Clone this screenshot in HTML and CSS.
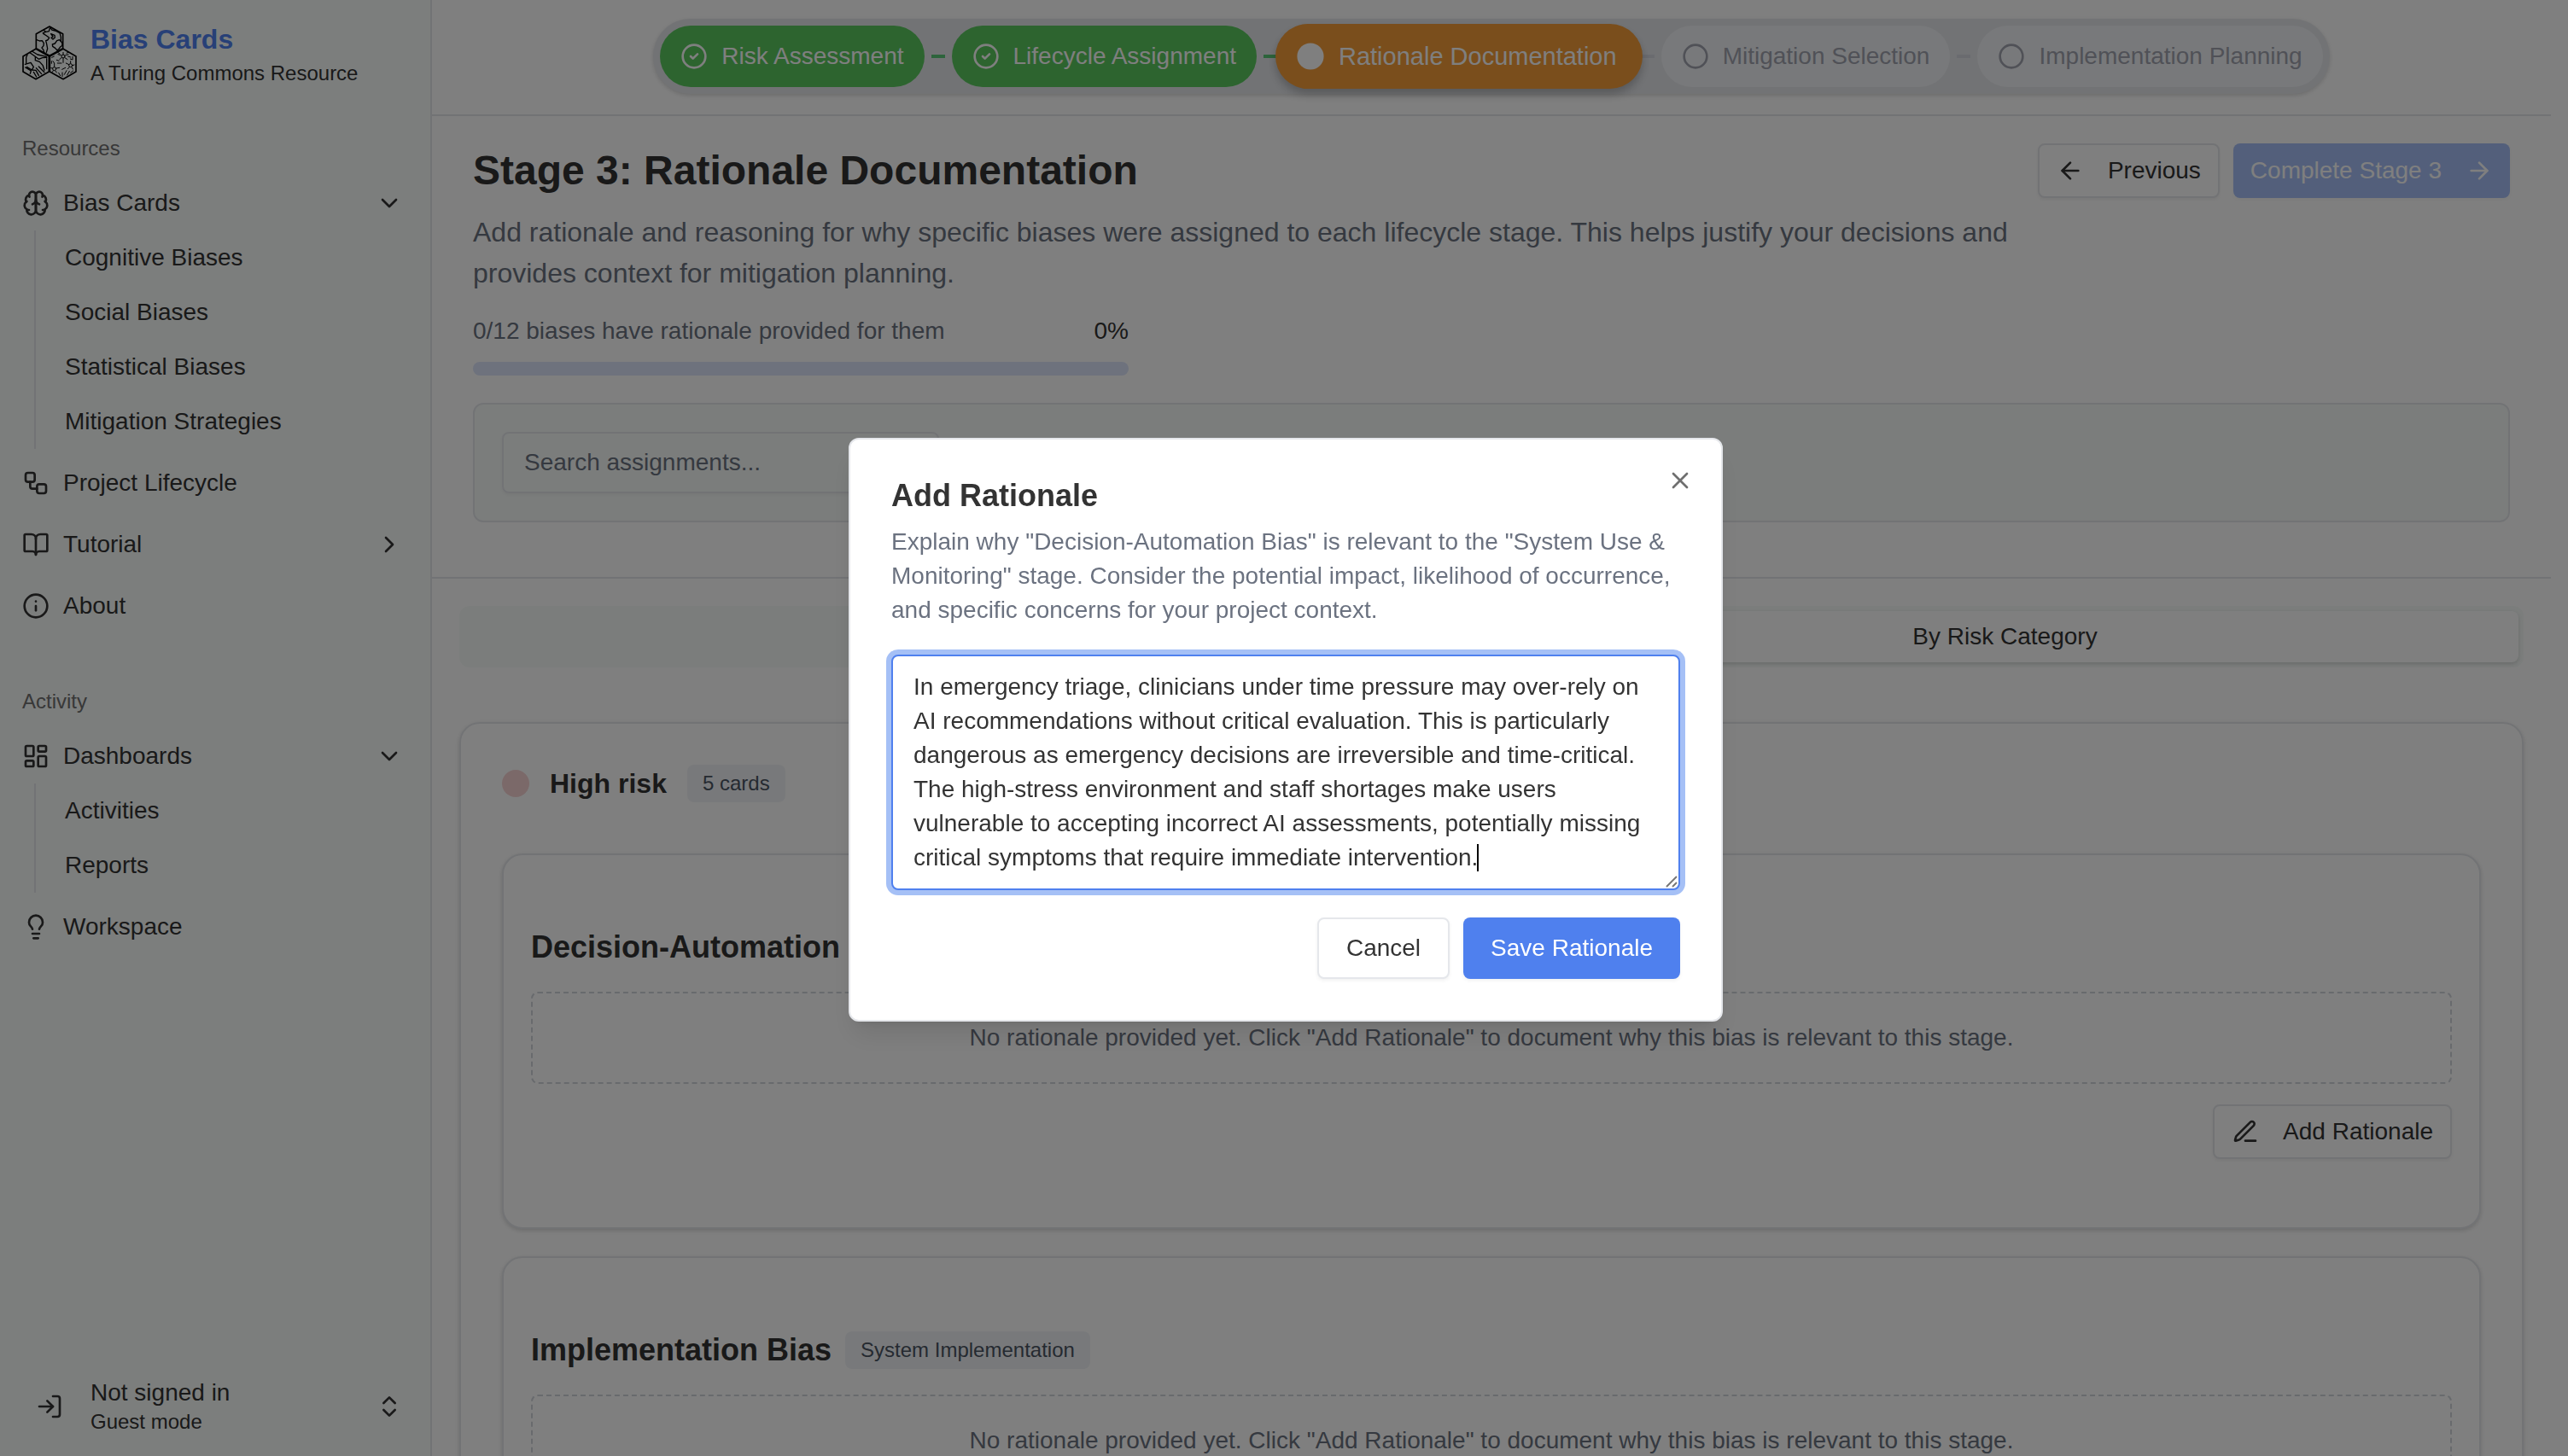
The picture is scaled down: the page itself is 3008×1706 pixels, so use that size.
FILE: index.html
```html
<!DOCTYPE html>
<html lang="en">
<head>
<meta charset="utf-8">
<title>Bias Cards</title>
<link rel="stylesheet" href="styles.css">
</head>
<body>
<div class="app">
  <aside class="sidebar">
    <header class="brand">
      <svg class="brand-logo" viewBox="18 18 192 192" fill="none" stroke="#000" stroke-width="5" stroke-linejoin="round" stroke-linecap="round" aria-hidden="true">
        <path d="M114 21 161 47V98L114 124 67 98V47Z"/>
        <path d="M66 100 112 126V180L66 206 21 180V126Z"/>
        <path d="M162 100 207 126V180L162 206 115 180V126Z"/>
        <g stroke-width="4">
          <path d="M93 34 101 40 112 38 115 27M101 40 91 44M116 23 122 33 134 36 150 44 154 58V74"/>
          <path d="M69 68 79 72 88 71 94 80 93 89 87 96 93 104 95 113M92 46 104 54 113 61 107 69 101 71 104 83 107 99 103 112"/>
          <path d="M119 47 132 52 133 60 126 66 120 61 126 57Z"/>
          <path d="M133 81 140 71 149 68 158 77 159 88 151 94 147 100 141 105 134 97 125 91 124 84Z"/>
          <path d="M36 121 32 130V150M52 108 72 120 103 127M46 114 64 127 76 136 89 131 105 130M64 127 64 140 79 145 90 157 96 175"/>
          <path d="M104 134V170M28 154 48 148 58 163 52 174 34 163M29 165 49 177 46 187M52 174 66 175 76 193M67 167 86 188M76 162 96 182M58 181 68 198"/>
        </g>
        <g stroke-width="3">
          <circle cx="162" cy="126" r="6"/><circle cx="188" cy="158" r="6"/><circle cx="131" cy="170" r="6"/>
          <path d="M162 112V120M162 132V148M154 122 144 119M170 122 180 119M156 131 149 137M168 131 177 137M182 155 172 150M188 150V143M194 158 201 156M184 164 178 170M192 164 196 171M125 168 119 167M131 163V150L126 143M137 168 149 166M134 176 139 183M127 176 124 181"/>
          <path d="M122 130 130 126M142 111 150 117M181 111 174 115M195 127V138L187 135M142 150H156M170 166 158 172M159 183V197M146 184 152 194M174 176 166 190M184 178 176 192M197 177 188 184M121 143V151M147 142 139 139M179 126 188 129"/>
        </g>
      </svg>
      <div>
        <p class="brand-title">Bias Cards</p>
        <p class="brand-sub">A Turing Commons Resource</p>
      </div>
    </header>

    <nav class="nav-group" aria-label="Resources">
      <h2 class="nav-label">Resources</h2>
      <ul class="nav-list">
        <li>
          <a class="nav-item" href="#">
            <svg class="icon" viewBox="0 0 24 24"><path d="M12 5a3 3 0 1 0-5.997.125 4 4 0 0 0-2.526 5.77 4 4 0 0 0 .556 6.588A4 4 0 1 0 12 18Z"/><path d="M12 5a3 3 0 1 1 5.997.125 4 4 0 0 1 2.526 5.77 4 4 0 0 1-.556 6.588A4 4 0 1 1 12 18Z"/><path d="M15 13a4.5 4.5 0 0 1-3-4 4.5 4.5 0 0 1-3 4"/><path d="M17.599 6.5a3 3 0 0 0 .399-1.375"/><path d="M6.003 5.125A3 3 0 0 0 6.401 6.5"/><path d="M3.477 10.896a4 4 0 0 1 .585-.396"/><path d="M19.938 10.5a4 4 0 0 1 .585.396"/><path d="M6 18a4 4 0 0 1-1.967-.516"/><path d="M19.967 17.484A4 4 0 0 1 18 18"/></svg>
            <span class="nav-text">Bias Cards</span>
            <svg class="icon" viewBox="0 0 24 24"><path d="m6 9 6 6 6-6"/></svg>
          </a>
          <ul class="nav-sub">
            <li><a class="nav-subitem" href="#">Cognitive Biases</a></li>
            <li><a class="nav-subitem" href="#">Social Biases</a></li>
            <li><a class="nav-subitem" href="#">Statistical Biases</a></li>
            <li><a class="nav-subitem" href="#">Mitigation Strategies</a></li>
          </ul>
        </li>
        <li>
          <a class="nav-item" href="#">
            <svg class="icon" viewBox="0 0 24 24"><rect width="8" height="8" x="3" y="3" rx="2"/><path d="M7 11v4a2 2 0 0 0 2 2h4"/><rect width="8" height="8" x="13" y="13" rx="2"/></svg>
            <span class="nav-text">Project Lifecycle</span>
          </a>
        </li>
        <li>
          <a class="nav-item" href="#">
            <svg class="icon" viewBox="0 0 24 24"><path d="M12 7v14"/><path d="M3 18a1 1 0 0 1-1-1V4a1 1 0 0 1 1-1h5a4 4 0 0 1 4 4 4 4 0 0 1 4-4h5a1 1 0 0 1 1 1v13a1 1 0 0 1-1 1h-6a3 3 0 0 0-3 3 3 3 0 0 0-3-3z"/></svg>
            <span class="nav-text">Tutorial</span>
            <svg class="icon" viewBox="0 0 24 24"><path d="m9 18 6-6-6-6"/></svg>
          </a>
        </li>
        <li>
          <a class="nav-item" href="#">
            <svg class="icon" viewBox="0 0 24 24"><circle cx="12" cy="12" r="10"/><path d="M12 16v-4"/><path d="M12 8h.01"/></svg>
            <span class="nav-text">About</span>
          </a>
        </li>
      </ul>
    </nav>

    <nav class="nav-group" aria-label="Activity">
      <h2 class="nav-label">Activity</h2>
      <ul class="nav-list">
        <li>
          <a class="nav-item" href="#">
            <svg class="icon" viewBox="0 0 24 24"><rect width="7" height="9" x="3" y="3" rx="1"/><rect width="7" height="5" x="14" y="3" rx="1"/><rect width="7" height="9" x="14" y="12" rx="1"/><rect width="7" height="5" x="3" y="16" rx="1"/></svg>
            <span class="nav-text">Dashboards</span>
            <svg class="icon" viewBox="0 0 24 24"><path d="m6 9 6 6 6-6"/></svg>
          </a>
          <ul class="nav-sub">
            <li><a class="nav-subitem" href="#">Activities</a></li>
            <li><a class="nav-subitem" href="#">Reports</a></li>
          </ul>
        </li>
        <li>
          <a class="nav-item" href="#">
            <svg class="icon" viewBox="0 0 24 24"><path d="M15 14c.2-1 .7-1.700 1.500-2.500 1-.9 1.500-2.200 1.500-3.500A6 6 0 0 0 6 8c0 1 .2 2.200 1.500 3.500.7.7 1.300 1.500 1.500 2.500"/><path d="M9 18h6"/><path d="M10 22h4"/></svg>
            <span class="nav-text">Workspace</span>
          </a>
        </li>
      </ul>
    </nav>

    <footer class="account">
      <button class="account-button" type="button">
        <span class="account-avatar">
          <svg class="icon" viewBox="0 0 24 24"><path d="M15 3h4a2 2 0 0 1 2 2v14a2 2 0 0 1-2 2h-4"/><path d="m10 17 5-5-5-5"/><path d="M15 12H3"/></svg>
        </span>
        <span class="account-text">
          <span class="account-name">Not signed in</span>
          <span class="account-mode">Guest mode</span>
        </span>
        <svg class="icon" viewBox="0 0 24 24"><path d="m7 15 5 5 5-5"/><path d="m7 9 5-5 5 5"/></svg>
      </button>
    </footer>
  </aside>

  <main class="main">
    <div class="stage-bar">
      <ol class="stages">
        <li class="stage stage-done"><svg class="icon" viewBox="0 0 24 24"><circle cx="12" cy="12" r="10"/><path d="m9 12 2 2 4-4"/></svg>Risk Assessment</li>
        <li class="stage-link stage-link-done" aria-hidden="true"></li>
        <li class="stage stage-done"><svg class="icon" viewBox="0 0 24 24"><circle cx="12" cy="12" r="10"/><path d="m9 12 2 2 4-4"/></svg>Lifecycle Assignment</li>
        <li class="stage-link stage-link-done" aria-hidden="true"></li>
        <li class="stage stage-current" aria-current="step"><svg class="icon" viewBox="0 0 24 24"><circle cx="12" cy="12" r="10"/></svg>Rationale Documentation</li>
        <li class="stage-link" aria-hidden="true"></li>
        <li class="stage"><svg class="icon" viewBox="0 0 24 24"><circle cx="12" cy="12" r="10"/></svg>Mitigation Selection</li>
        <li class="stage-link" aria-hidden="true"></li>
        <li class="stage"><svg class="icon" viewBox="0 0 24 24"><circle cx="12" cy="12" r="10"/></svg>Implementation Planning</li>
      </ol>
    </div>

    <section class="intro">
      <div class="intro-row">
        <div class="intro-text">
          <h1 class="page-title">Stage 3: Rationale Documentation</h1>
          <p class="page-desc">Add rationale and reasoning for why specific biases were assigned to each lifecycle stage. This helps justify your decisions and provides context for mitigation planning.</p>
        </div>
        <div class="intro-actions">
          <button class="btn btn-small" type="button"><svg class="icon" viewBox="0 0 24 24"><path d="m12 19-7-7 7-7"/><path d="M19 12H5"/></svg>Previous</button>
          <button class="btn btn-small btn-primary" type="button" disabled>Complete Stage 3<svg class="icon" viewBox="0 0 24 24"><path d="M5 12h14"/><path d="m12 5 7 7-7 7"/></svg></button>
        </div>
      </div>
      <div class="progress">
        <div class="progress-label"><span>0/12 biases have rationale provided for them</span><span class="progress-value">0%</span></div>
        <div class="progress-track" role="progressbar" aria-valuenow="0" aria-valuemin="0" aria-valuemax="100" aria-label="Rationale progress"></div>
      </div>
      <div class="filters">
        <input class="search" type="text" placeholder="Search assignments..." aria-label="Search assignments">
      </div>
    </section>

    <section class="content">
      <div class="tabs" role="tablist">
        <button class="tab" type="button" role="tab" aria-selected="false">By Lifecycle Stage</button>
        <button class="tab tab-active" type="button" role="tab" aria-selected="true">By Risk Category</button>
      </div>

      <section class="risk">
        <header class="risk-head">
          <span class="risk-dot"></span>
          <h2 class="risk-title">High risk</h2>
          <span class="badge">5 cards</span>
        </header>
        <div class="cards">
          <article class="card">
            <header class="card-head">
              <h3 class="card-title">Decision-Automation Bias</h3>
              <span class="badge">System Use &amp; Monitoring</span>
            </header>
            <p class="empty">No rationale provided yet. Click "Add Rationale" to document why this bias is relevant to this stage.</p>
            <div class="card-actions">
              <button class="btn btn-small" type="button"><svg class="icon" viewBox="0 0 24 24"><path d="M12 20h9"/><path d="M16.376 3.622a1 1 0 0 1 3.002 3.002L7.368 18.635a2 2 0 0 1-.855.506l-2.872.838a.5.5 0 0 1-.62-.62l.838-2.872a2 2 0 0 1 .506-.854z"/></svg>Add Rationale</button>
            </div>
          </article>
          <article class="card">
            <header class="card-head">
              <h3 class="card-title">Implementation Bias</h3>
              <span class="badge">System Implementation</span>
            </header>
            <p class="empty">No rationale provided yet. Click "Add Rationale" to document why this bias is relevant to this stage.</p>
          </article>
        </div>
      </section>
    </section>
  </main>
</div>

<div class="overlay">
  <div class="modal" role="dialog" aria-modal="true" aria-labelledby="modal-title" aria-describedby="modal-desc">
    <h2 class="modal-title" id="modal-title">Add Rationale</h2>
    <p class="modal-desc" id="modal-desc">Explain why "Decision-Automation Bias" is relevant to the "System Use &amp; Monitoring" stage. Consider the potential impact, likelihood of occurrence, and specific concerns for your project context.</p>
    <div class="field">
      <textarea class="rationale" rows="6" aria-labelledby="modal-title">In emergency triage, clinicians under time pressure may over-rely on AI recommendations without critical evaluation. This is particularly dangerous as emergency decisions are irreversible and time-critical. The high-stress environment and staff shortages make users vulnerable to accepting incorrect AI assessments, potentially missing critical symptoms that require immediate intervention.</textarea>
      <span class="caret" aria-hidden="true"></span>
      <svg class="grip" viewBox="0 0 14 14" aria-hidden="true"><path d="M1 13 13 1M8 13 13 8"/></svg>
    </div>
    <div class="modal-actions">
      <button class="btn" type="button">Cancel</button>
      <button class="btn btn-primary" type="button">Save Rationale</button>
    </div>
    <button class="modal-close" type="button" aria-label="Close"><svg class="icon" viewBox="0 0 24 24"><path d="M18 6 6 18"/><path d="m6 6 12 12"/></svg></button>
  </div>
</div>
</body>
</html>
```
FILE: styles.css
```css
:root {
  --text: #333;
  --muted: #6b7280;
  --border: #e5e7eb;
  --surface: #f9fcfb;
  --primary: #4f80ee;
  --shadow-sm: 0 2px 6px rgba(0, 0, 0, .1), 0 2px 4px rgba(0, 0, 0, .06);
}

* { box-sizing: border-box; }

body {
  margin: 0;
  background: #fff;
  color: var(--text);
  font: 28px/40px "Liberation Sans", Arial, Helvetica, sans-serif;
}

h1, h2, h3, p, ul, ol { margin: 0; padding: 0; }
ul, ol { list-style: none; }
a { color: inherit; text-decoration: none; }
button, input, textarea { font: inherit; color: inherit; }

.icon {
  width: 32px;
  height: 32px;
  flex: none;
  fill: none;
  stroke: currentColor;
  stroke-width: 2;
  stroke-linecap: round;
  stroke-linejoin: round;
}

.app {
  display: flex;
  height: 100vh;
  overflow: hidden;
}

/* Sidebar */
.sidebar {
  display: flex;
  flex-direction: column;
  width: 506px;
  flex: none;
  padding: 22px 30px 16px 26px;
  background: var(--surface);
  border-right: 2px solid var(--border);
}

.brand { display: flex; align-items: center; gap: 16px; margin-bottom: 40px; }
.brand-logo { width: 64px; height: 64px; }
.brand-title { font-size: 32px; line-height: 48px; font-weight: 700; color: var(--primary); }
.brand-sub { font-size: 24px; line-height: 32px; }

.nav-group { margin-bottom: 48px; }
.nav-label { font-size: 24px; line-height: 64px; font-weight: 400; color: #707070; }
.nav-list { display: flex; flex-direction: column; gap: 8px; }
.nav-item { display: flex; align-items: center; gap: 16px; height: 64px; margin-right: 2px; }
.nav-text { flex: 1; }
.nav-sub {
  display: flex;
  flex-direction: column;
  gap: 8px;
  margin-left: 14px;
  padding: 4px 0 4px 34px;
  border-left: 2px solid var(--border);
}
.nav-subitem { display: block; line-height: 56px; }

.account { margin-top: auto; }
.account-button {
  display: flex;
  align-items: center;
  gap: 16px;
  width: 100%;
  height: 84px;
  padding: 0 2px 0 0;
  border: 0;
  background: none;
  text-align: left;
}
.account-avatar { display: grid; place-items: center; width: 64px; height: 64px; }
.account-text { display: flex; flex-direction: column; flex: 1; }
.account-name { line-height: 36px; }
.account-mode { font-size: 24px; line-height: 32px; }

/* Stage bar */
.main { flex: 1; min-width: 0; padding-right: 20px; }
.stage-bar {
  display: flex;
  justify-content: center;
  padding: 22px 0 24px;
  border-bottom: 2px solid var(--border);
}
.stages {
  display: flex;
  align-items: center;
  gap: 8px;
  height: 88px;
  padding: 0 8px;
  border-radius: 44px;
  background: #e5e7eb;
  box-shadow: var(--shadow-sm);
}
.stage {
  display: flex;
  align-items: center;
  gap: 16px;
  height: 72px;
  padding: 0 24px;
  border-radius: 36px;
  background: #f1f3f6;
  color: #a0a3af;
  white-space: nowrap;
}
.stage-done { background: #5ac85f; color: #fff; }
.stage-current {
  position: relative;
  z-index: 1;
  height: 76px;
  margin: 0 -10px;
  padding: 0 30px 0 24px;
  border-radius: 38px;
  background: #f49c38;
  color: #fff;
  font-size: 29px;
  box-shadow: 0 8px 12px rgba(0, 0, 0, .14), 0 4px 8px rgba(0, 0, 0, .1);
}
.stage-current .icon { width: 34px; height: 34px; fill: currentColor; }
.stage-link { width: 16px; height: 4px; background: #d5d7de; }
.stage-link-done { background: #5ac878; }

/* Intro */
.intro { padding: 32px 48px 64px; border-bottom: 2px solid var(--border); }
.intro-row { display: flex; align-items: flex-start; gap: 32px; }
.intro-text { flex: 1; }
.page-title { font-size: 48px; line-height: 64px; margin-bottom: 16px; }
.page-desc { font-size: 32px; line-height: 48px; color: var(--muted); }
.intro-actions { display: flex; gap: 16px; }

.btn {
  display: flex;
  align-items: center;
  height: 72px;
  padding: 0 32px;
  border: 2px solid var(--border);
  border-radius: 8px;
  background: #fff;
  white-space: nowrap;
  box-shadow: 0 2px 4px rgba(0, 0, 0, .06);
}
.btn-small { gap: 28px; height: 64px; padding: 0 20px; }
.btn-primary { border: 0; background: var(--primary); color: #fff; }
.btn-primary:disabled { opacity: .5; }

.progress { max-width: 768px; margin: 24px 0 32px; }
.progress-label { display: flex; justify-content: space-between; color: var(--muted); }
.progress-value { color: var(--text); }
.progress-track { height: 16px; margin-top: 16px; border-radius: 8px; background: #dce5fa; }

.filters {
  padding: 32px;
  border: 2px solid var(--border);
  border-radius: 12px;
  background: #f7fbf9;
}
.search {
  display: block;
  width: 100%;
  max-width: 512px;
  height: 72px;
  padding: 0 24px;
  border: 2px solid var(--border);
  border-radius: 8px;
  background: transparent;
  box-shadow: 0 2px 4px rgba(0, 0, 0, .05);
}
.search::placeholder { color: var(--muted); opacity: 1; }

/* Content */
.content { padding: 32px; }
.tabs {
  display: grid;
  grid-template-columns: 1fr 1fr;
  height: 72px;
  padding: 6px;
  border-radius: 12px;
  background: #f7fbf9;
}
.tab { border: 0; border-radius: 8px; background: transparent; color: var(--muted); }
.tab-active { background: #fff; color: var(--text); box-shadow: var(--shadow-sm); }

.risk {
  margin-top: 64px;
  padding: 48px;
  border: 2px solid var(--border);
  border-radius: 24px;
  box-shadow: var(--shadow-sm);
}
.risk-head { display: flex; align-items: center; gap: 24px; margin-bottom: 60px; }
.risk-dot { width: 32px; height: 32px; border-radius: 50%; background: #f6d3d3; }
.risk-title { font-size: 32px; line-height: 44px; }
.badge {
  padding: 6px 18px;
  border-radius: 8px;
  background: #f1f3f6;
  color: #4b5563;
  font-size: 24px;
  line-height: 32px;
}

.cards { display: flex; flex-direction: column; gap: 32px; }
.card {
  padding: 80px 32px;
  border: 2px solid var(--border);
  border-radius: 24px;
  background: #fff;
  box-shadow: var(--shadow-sm);
}
.card-head { display: flex; align-items: center; gap: 16px; margin-bottom: 24px; }
.card-title { font-size: 36px; line-height: 56px; }
.empty {
  padding: 32px;
  border: 2px dashed #d1d5db;
  border-radius: 8px;
  color: var(--muted);
  text-align: center;
}
.card-actions { display: flex; justify-content: flex-end; margin-top: 24px; }

/* Dialog */
.overlay {
  position: fixed;
  inset: 0;
  z-index: 10;
  display: grid;
  place-items: center;
  padding: 4px 0 0 4px;
  background: rgba(0, 0, 0, .5);
}
.modal {
  position: relative;
  width: 1024px;
  padding: 48px;
  border: 2px solid var(--border);
  border-radius: 12px;
  background: #fff;
  box-shadow: 0 20px 30px -6px rgba(0, 0, 0, .1), 0 8px 12px -8px rgba(0, 0, 0, .1);
}
.modal-title { font-size: 36px; line-height: 36px; margin-bottom: 16px; }
.modal-desc { color: var(--muted); }
.field { position: relative; margin: 32px 0; }
.rationale {
  display: block;
  width: 100%;
  height: 276px;
  padding: 16px 24px;
  border: 2px solid var(--primary);
  border-radius: 8px;
  outline: 0;
  overflow: hidden;
  background: #fff;
  box-shadow: 0 0 0 6px #a5c0f6;
  caret-color: transparent;
  resize: vertical;
}
.rationale::-webkit-resizer { background: transparent; }
.caret {
  position: absolute;
  left: 686px;
  bottom: 22px;
  width: 2px;
  height: 32px;
  background: #000;
}
.grip {
  position: absolute;
  right: 3px;
  bottom: 3px;
  width: 14px;
  height: 14px;
  fill: none;
  stroke: #777;
  stroke-width: 2;
  pointer-events: none;
}
.modal-actions { display: flex; justify-content: flex-end; gap: 16px; }
.modal-close {
  position: absolute;
  top: 32px;
  right: 32px;
  display: flex;
  padding: 0;
  border: 0;
  background: none;
  opacity: .7;
}
```
